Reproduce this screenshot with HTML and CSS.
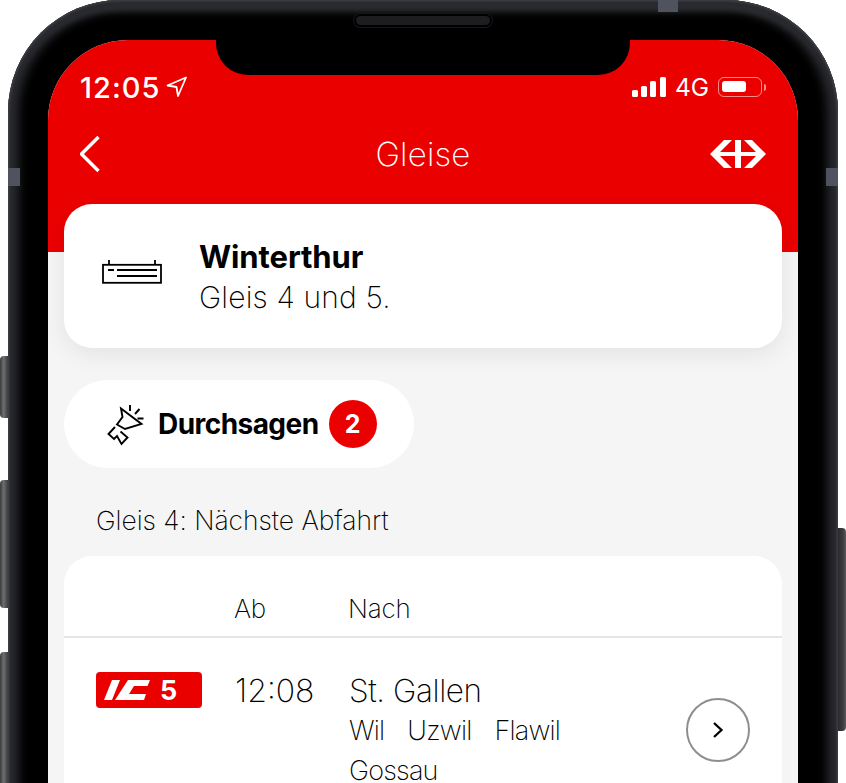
FILE: index.html
```html
<!DOCTYPE html>
<html>
<head>
<meta charset="utf-8">
<title>Gleise</title>
<link rel="stylesheet" href="styles.css">
</head>
<body>
<div class="page">
 <span class="side-btn mute"></span>
 <span class="side-btn vol-up"></span>
 <span class="side-btn vol-down"></span>
 <span class="side-btn power"></span>
 <div class="phone">
  <span class="band band-left"></span>
  <span class="band band-right"></span>
  <span class="band band-top"></span>
  <div class="notch"><span class="speaker"></span></div>
  <div class="screen">
   <header class="top">
    <div class="status">
     <div class="status-left">
      <span class="clock">12:05</span>
      <svg class="loc" viewBox="0 0 22 22"><path d="M1.500 9.500L20 1.500L12 20L10.500 11Z" fill="none" stroke="#fff" stroke-width="1.800" stroke-linejoin="round"/></svg>
     </div>
     <div class="status-right">
      <div class="signal"><span class="s1"></span><span class="s2"></span><span class="s3"></span><span class="s4"></span></div>
      <span class="net">4G</span>
      <div class="battery"><span class="charge"></span></div>
      <span class="battery-cap"></span>
     </div>
    </div>
    <div class="nav">
     <svg class="back" viewBox="0 0 24 38"><path d="M18.500 2L1.500 19L18.500 36" fill="none" stroke="#fff" stroke-width="3.400"/></svg>
     <h1>Gleise</h1>
     <svg class="logo" viewBox="0 0 56 28"><path fill="#fff" d="M14 0H22L10 12H25V0H31V12H46L34 0H42L56 14L42 28H34L46 16H31V28H25V16H10L22 28H14L0 14Z"/></svg>
    </div>
   </header>
   <section class="station">
    <svg class="platform" viewBox="0 0 60 26" fill="none" stroke="#000" stroke-width="1.800">
     <rect x="1" y="5.800" width="58" height="18"/>
     <path d="M7 1V5.800M53 1V5.800M6 11H12M15 11H55M15 17H55"/>
    </svg>
    <div class="station-text">
     <h2>Winterthur</h2>
     <p>Gleis 4 und 5.</p>
    </div>
   </section>
   <div class="announce">
    <svg class="horn" viewBox="0 0 50 50" fill="none" stroke="#000" stroke-width="1.900">
     <path d="M21 9.500L41.500 25L25 30L17 25.500L22.500 18Z"/>
     <path d="M15 28L8.500 35L14 40L17 37L21.500 45L27.500 38.500L20.500 32.500"/>
     <path d="M30 6V12M39.500 10L35 15M43.500 19.500H37.500"/>
    </svg>
    <strong>Durchsagen</strong>
    <span class="badge">2</span>
   </div>
   <p class="label">Gleis 4: Nächste Abfahrt</p>
   <section class="board">
    <div class="board-head">
     <span class="col-ab">Ab</span>
     <span>Nach</span>
    </div>
    <div class="conn">
     <div class="col-line">
      <div class="ic">
       <svg viewBox="0 0 46 20"><path fill="#fff" d="M0 20L8 0H16L8 20ZM11 20L24 0H46L43.500 6H30L25 14H42L40 20Z"/></svg>
       <span>5</span>
      </div>
     </div>
     <div class="col-time">12:08</div>
     <div class="dest">
      <div class="dest-name">St. Gallen</div>
      <div class="via"><span>Wil</span><span>Uzwil</span><span>Flawil</span><span>Gossau</span></div>
     </div>
     <div class="more">
      <svg viewBox="0 0 12 16"><path d="M2 1L9.500 8L2 15" fill="none" stroke="#000" stroke-width="2.300"/></svg>
     </div>
    </div>
   </section>
  </div>
 </div>
</div>
</body>
</html>
```

FILE: styles.css
```css
html, body {
 margin: 0;
 padding: 0;
 background: #fff;
 overflow: hidden;
}
body {
 font-family: Inter, 'Liberation Sans', sans-serif;
 color: #000;
}
h1, h2, p {
 margin: 0;
 padding: 0;
}
.page {
 height: 783px;
 overflow: hidden;
 position: relative;
 width: 846px;
}
.side-btn {
 background: linear-gradient(90deg, #3a3a3c, #6e6e70 45%, #3c3c3f);
 border-radius: 4px 0 0 4px;
 left: 0;
 position: absolute;
 width: 8px;
}
.mute { height: 62px; top: 356px; }
.vol-up { height: 128px; top: 480px; }
.vol-down { height: 140px; top: 652px; }
.power {
 background: linear-gradient(90deg, #2b2b2e, #3c3c3f 60%, #5a5a5c);
 border-radius: 0 4px 4px 0;
 height: 203px;
 left: 838px;
 top: 528px;
}
.phone {
 background: #000;
 border-radius: 112px 112px 0 0;
 box-shadow: inset 0 0 3px 1px #46474d, inset 0 0 10px 11px #28292e, inset 0 11px 6px -2px #45464a;
 box-sizing: border-box;
 height: 1000px;
 margin: 0 8px;
 padding: 40px 40px 0;
 position: relative;
 width: 830px;
}
.band {
 background: #4f535e;
 position: absolute;
}
.band-left { height: 18px; left: 0; top: 168px; width: 12px; }
.band-right { height: 18px; right: 0; top: 168px; width: 12px; }
.band-top { height: 12px; left: 650px; top: 0; width: 20px; }
.notch {
 background: #000;
 border-radius: 0 0 32px 32px;
 height: 55px;
 left: 208px;
 position: absolute;
 top: 20px;
 width: 414px;
 z-index: 2;
}
.speaker {
 background: #1d1d1f;
 border-radius: 5px;
 box-shadow: 0 0 0 2px #000, 0 0 0 3px #16161a;
 height: 9px;
 left: 140px;
 position: absolute;
 top: -4px;
 width: 134px;
}
.screen {
 background: #f5f5f5;
 border-radius: 80px 80px 0 0;
 height: 960px;
 overflow: hidden;
}
.top {
 background: #eb0000;
 box-sizing: border-box;
 color: #fff;
 height: 212px;
 padding: 30px 32px 0;
}
.status {
 align-items: center;
 display: flex;
 height: 34px;
 justify-content: space-between;
}
.status-left, .status-right, .signal {
 align-items: center;
 display: flex;
}
.clock {
 font-size: 29px;
 font-weight: 500;
 letter-spacing: 1px;
}
.loc {
 height: 22px;
 margin-left: 6px;
 width: 22px;
}
.signal {
 align-items: flex-end;
 gap: 3px;
 height: 20px;
}
.signal span {
 background: #fff;
 border-radius: 1.500px;
 display: block;
 width: 6px;
}
.signal .s4 { margin-left: 1px; }
.s1 { height: 7px; }
.s2 { height: 11px; }
.s3 { height: 16px; }
.s4 { height: 20px; }
.net {
 font-size: 24.500px;
 font-weight: 400;
 margin: 0 9px;
}
.battery {
 border: 1.500px solid rgba(255, 255, 255, 0.55);
 border-radius: 6px;
 box-sizing: border-box;
 height: 20px;
 padding: 3px;
 width: 44px;
}
.charge {
 background: #fff;
 border-radius: 3px;
 display: block;
 height: 11px;
 width: 24px;
}
.battery-cap {
 background: rgba(255, 255, 255, 0.55);
 border-radius: 0 2px 2px 0;
 height: 7px;
 margin-left: 2px;
 width: 2px;
}
.nav {
 align-items: center;
 display: flex;
 height: 40px;
 justify-content: space-between;
 margin-top: 30px;
 position: relative;
}
.back {
 height: 38px;
 width: 24px;
}
.nav h1 {
 font-size: 33px;
 font-weight: 250;
 left: 0;
 letter-spacing: 0.200px;
 line-height: 38px;
 position: absolute;
 right: 0;
 text-align: center;
}
.logo {
 height: 28px;
 width: 56px;
}
.station {
 align-items: center;
 background: #fff;
 border-radius: 28px;
 box-shadow: 0 6px 24px rgba(0, 0, 0, 0.08);
 box-sizing: border-box;
 display: flex;
 height: 144px;
 margin: -48px 16px 0;
 padding-left: 38px;
 position: relative;
}
.platform {
 height: 26px;
 margin: -8px 37px 0 0;
 width: 60px;
}
.station-text {
 padding-top: 2px;
}
.station h2 {
 font-size: 31px;
 font-weight: 700;
 letter-spacing: -0.100px;
 line-height: 40px;
}
.station p {
 font-size: 30px;
 font-weight: 250;
 letter-spacing: 0.150px;
 line-height: 40px;
}
.announce {
 align-items: center;
 background: #fff;
 border-radius: 44px;
 box-sizing: border-box;
 display: flex;
 height: 88px;
 margin: 32px 0 0 16px;
 padding-left: 36px;
 width: 350px;
}
.horn {
 height: 50px;
 margin-right: 8px;
 width: 50px;
}
.announce strong {
 font-size: 28px;
 font-weight: 700;
 letter-spacing: -0.550px;
}
.badge {
 background: #eb0000;
 border-radius: 50%;
 color: #fff;
 font-size: 25px;
 font-weight: 700;
 height: 48px;
 line-height: 48px;
 margin-left: 10px;
 text-align: center;
 width: 48px;
}
.label {
 font-size: 26.500px;
 font-weight: 250;
 letter-spacing: -0.050px;
 line-height: 36px;
 margin: 34px 0 0 48px;
}
.board {
 background: #fff;
 border-radius: 28px 28px 0 0;
 margin: 18px 16px 0;
 min-height: 300px;
}
.board-head {
 align-items: center;
 border-bottom: 2px solid #e6e6e6;
 display: flex;
 font-size: 26px;
 font-weight: 250;
 height: 56px;
 letter-spacing: -0.200px;
 padding: 24px 0 0 170px;
}
.col-ab {
 width: 114px;
}
.conn {
 align-items: flex-start;
 display: flex;
 padding: 34px 32px 0;
}
.col-line {
 width: 139px;
}
.ic {
 align-items: center;
 background: #eb0000;
 border-radius: 4px;
 color: #fff;
 display: flex;
 font-size: 27px;
 font-weight: 700;
 height: 36px;
 padding-left: 8px;
 width: 98px;
}
.ic svg {
 height: 20px;
 margin-right: 10px;
 width: 46px;
}
.col-time {
 font-size: 32px;
 font-weight: 250;
 letter-spacing: 0;
 line-height: 38px;
 width: 114px;
}
.dest {
 flex: 1;
}
.dest-name {
 font-size: 31.500px;
 font-weight: 250;
 letter-spacing: -0.400px;
 line-height: 38px;
}
.via {
 column-gap: 23px;
 display: flex;
 flex-wrap: wrap;
 font-size: 27px;
 font-weight: 250;
 letter-spacing: -0.800px;
 line-height: 40px;
 margin-top: 1px;
 max-width: 260px;
}
.more {
 align-items: center;
 border: 2px solid #8e8e8e;
 border-radius: 50%;
 box-sizing: border-box;
 display: flex;
 height: 64px;
 justify-content: center;
 margin-top: 26px;
 width: 64px;
}
.more svg {
 height: 16px;
 width: 12px;
}
```
